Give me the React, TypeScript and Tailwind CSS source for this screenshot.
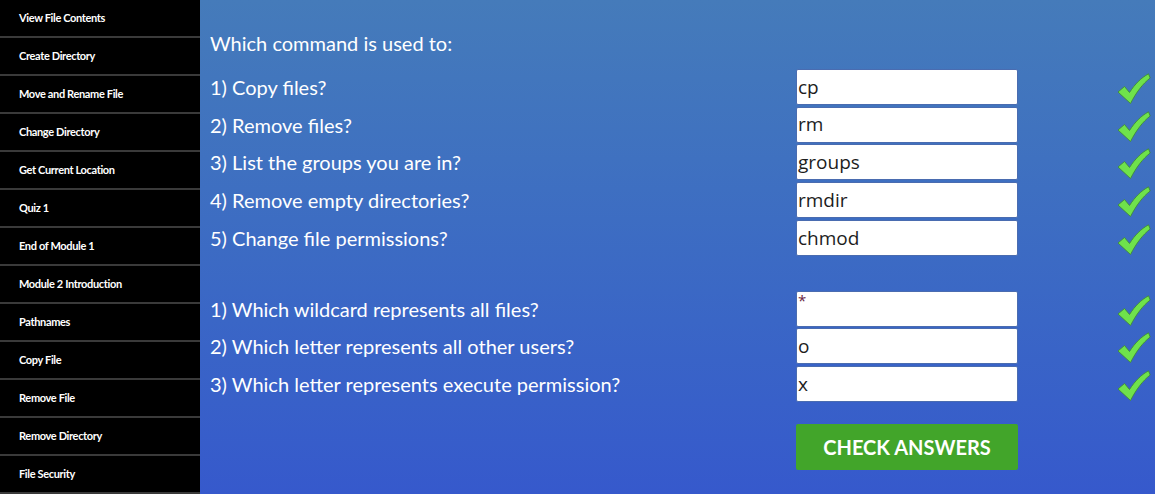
import React from "react";

const nav = [
  "View File Contents",
  "Create Directory",
  "Move and Rename File",
  "Change Directory",
  "Get Current Location",
  "Quiz 1",
  "End of Module 1",
  "Module 2 Introduction",
  "Pathnames",
  "Copy File",
  "Remove File",
  "Remove Directory",
  "File Security",
];

const group1 = [
  ["1) Copy files?", "cp"],
  ["2) Remove files?", "rm"],
  ["3) List the groups you are in?", "groups"],
  ["4) Remove empty directories?", "rmdir"],
  ["5) Change file permissions?", "chmod"],
];

const group2 = [
  ["1) Which wildcard represents all files?", "*"],
  ["2) Which letter represents all other users?", "o"],
  ["3) Which letter represents execute permission?", "x"],
];

function Check() {
  return (
    <svg width="34" height="32" viewBox="0 0 34 32">
      <path
        d="M1 19 L7.5 13.5 L12.5 19.5 C18 11 24 5 31.5 0.8 L33.2 5 C25.5 11 19.5 19 13.5 30.5 Z"
        fill="#6fe24b"
        stroke="#3f8a3a"
        strokeWidth="0.9"
        strokeLinejoin="round"
      />
    </svg>
  );
}

function Row({ q, a }: { q: string; a: string }) {
  return (
    <div className="flex items-center h-[36px]">
      <div className="w-[586px] text-white text-[20px] leading-none">{q}</div>
      <div className="w-[222px] h-[36px] bg-white border border-[#4a6cb0] rounded-[2px] flex items-center pl-[1px] text-[19px] text-[#1d1d1d] font-['Open_Sans',sans-serif]">
        {a === "*" ? (
          <span className="self-start mt-[1px] text-[15px] text-[#6a2440] leading-none">*</span>
        ) : (
          a
        )}
      </div>
      <div className="ml-[99px] pt-[4px]">
        <Check />
      </div>
    </div>
  );
}

export default function App() {
  return (
    <div className="flex w-[1155px] h-[494px] overflow-hidden font-['Lato',sans-serif]">
      <div className="w-[200px] shrink-0 bg-black flex flex-col">
        {nav.map((n) => (
          <div
            key={n}
            className="h-[38px] shrink-0 border-b-2 border-[#3a3a3a] flex items-center pl-[19px] text-white text-[11px] font-bold tracking-[-0.35px]"
          >
            {n}
          </div>
        ))}
      </div>
      <div className="flex-1 bg-linear-to-b from-[#457bba] to-[#3659cc] pl-[10px]">
        <div className="h-[69px] flex items-end pb-[16px] text-white text-[20px] leading-none">
          Which command is used to:
        </div>
        <div className="flex flex-col gap-[1.7px]">
          {group1.map(([q, a]) => (
            <Row key={q} q={q} a={a} />
          ))}
        </div>
        <div className="flex flex-col gap-[1.5px] mt-[35px]">
          {group2.map(([q, a]) => (
            <Row key={q} q={q} a={a} />
          ))}
        </div>
        <div className="mt-[22px] ml-[586px] w-[222px] h-[46px] bg-[#42a52a] rounded-[2px] flex items-center justify-center text-white text-[20px] font-bold">
          CHECK ANSWERS
        </div>
      </div>
    </div>
  );
}
